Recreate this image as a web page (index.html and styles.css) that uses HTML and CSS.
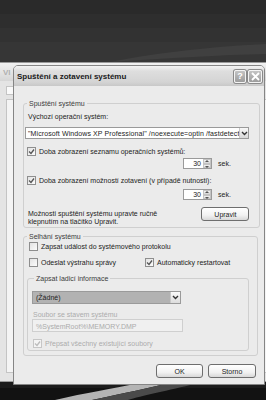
FILE: index.html
```html
<!DOCTYPE html>
<html lang="cs">
<head>
    <meta charset="UTF-8">
    <title>Spuštění a zotavení systému</title>
    <link rel="stylesheet" href="styles.css">
</head>
<body>
<div class="desktop">
    <!-- tapeta -->
    <svg class="wallpaper" width="266" height="400" viewBox="0 0 266 400">
        <rect x="0" y="0" width="266" height="400" fill="#333333"/>
        <rect x="0" y="0" width="266" height="14" fill="#2a2a2a"/>
        <rect x="0" y="14" width="266" height="14" fill="#2e2e2e"/>
        <rect x="0" y="28" width="266" height="14" fill="#323232"/>
        <rect x="0" y="42" width="266" height="20" fill="#363636"/>
        <path d="M110 62 C160 52 220 46 266 44 L266 54 C220 55 170 58 110 62 Z" fill="#404040"/>
        <rect x="0" y="382" width="266" height="6" fill="#1c1c1c"/>
        <rect x="0" y="388" width="266" height="12" fill="#121212"/>
        <path d="M55 400 C85 393 115 388 135 384 L165 384 C140 390 110 396 92 400 Z" fill="#b4b4b4"/>
        <path d="M92 400 C110 396 140 390 165 384 L195 384 C170 390 140 396 128 400 Z" fill="#4a4a4a"/>
    </svg>

    <!-- okno v pozadí -->
    <div class="back-window">
        <div class="back-title">Vl</div>
        <div class="back-tabs"><span class="back-tab"></span></div>
        <div class="back-panel"></div>
    </div>

    <!-- dialog -->
    <div class="dialog">
        <div class="titlebar">
            <span class="title">Spuštění a zotavení systému</span>
            <span class="tbtn help">?</span>
            <span class="tbtn close">
                <svg width="9" height="9" viewBox="0 0 9 9"><path d="M1 1 L8 8 M8 1 L1 8" stroke="#fff" stroke-width="1.8"/></svg>
            </span>
        </div>

        <div class="dialog-body">
            <fieldset class="group">
                <legend>Spuštění systému</legend>
                <div class="label">Výchozí operační systém:</div>
                <div class="select os-select">
                    <span class="select-text">"Microsoft Windows XP Professional" /noexecute=optin /fastdetect</span>
                    <span class="select-arrow"><svg width="7" height="5" viewBox="0 0 7 5"><path d="M1 1 L3.5 3.5 L6 1" fill="none" stroke="#333" stroke-width="1.4"/></svg></span>
                </div>
                <div class="check first-check"><span class="box checked"></span>Doba zobrazení seznamu operačních systémů:</div>
                <div class="spin-row">
                    <div class="spin"><span class="spin-val">30</span><span class="spin-btns"><i class="up"></i><i class="down"></i></span></div>
                    <span>sek.</span>
                </div>
                <div class="check second-check"><span class="box checked"></span>Doba zobrazení možností zotavení (v případě nutnosti):</div>
                <div class="spin-row spin-two">
                    <div class="spin"><span class="spin-val">30</span><span class="spin-btns"><i class="up"></i><i class="down"></i></span></div>
                    <span>sek.</span>
                </div>
                <div class="edit-row">
                    <p>Možnosti spuštění systému upravte ručně<br>klepnutím na tlačítko Upravit.</p>
                    <span class="button edit-btn">Upravit</span>
                </div>
            </fieldset>

            <fieldset class="group failure">
                <legend>Selhání systému</legend>
                <div class="check log-check"><span class="box"></span>Zapsat událost do systémového protokolu</div>
                <div class="check-pair">
                    <div class="check"><span class="box"></span>Odeslat výstrahu správy</div>
                    <div class="check"><span class="box checked"></span>Automaticky restartovat</div>
                </div>

                <fieldset class="group inner">
                    <legend>Zapsat ladicí informace</legend>
                    <div class="select dump-select">
                        <span class="select-text">(Žádné)</span>
                        <span class="select-arrow"><svg width="7" height="5" viewBox="0 0 7 5"><path d="M1 1 L3.5 3.5 L6 1" fill="none" stroke="#333" stroke-width="1.4"/></svg></span>
                    </div>
                    <div class="label disabled dump-label">Soubor se stavem systému</div>
                    <div class="textbox disabled">%SystemRoot%\MEMORY.DMP</div>
                    <div class="check disabled overwrite"><span class="box checked"></span>Přepsat všechny existující soubory</div>
                </fieldset>
            </fieldset>

            <div class="buttons">
                <span class="button ok-btn">OK</span>
                <span class="button cancel-btn">Storno</span>
            </div>
        </div>
    </div>

</div>
</body>
</html>
```

FILE: styles.css
```css
* {
    box-sizing: border-box;
}
body {
    margin: 0;
    font-family: "Liberation Sans", Arial, sans-serif;
    font-size: 7px;
    line-height: 9px;
    color: #222;
}
.desktop {
    position: relative;
    width: 266px;
    height: 400px;
    overflow: hidden;
    background-color: #333;
}

/* tapeta */
.wallpaper {
    position: absolute;
    left: 0;
    top: 0;
    display: block;
}

/* okno v pozadí */
.back-window {
    position: absolute;
    left: -10px;
    top: 62px;
    width: 290px;
    height: 320px;
    background: #e4e4e4;
    border: 1px solid #9a9a9a;
    border-radius: 5px 5px 0 0;
}
.back-title {
    height: 18px;
    padding: 5px 0 0 12px;
    color: #b0b0b0;
    font-weight: bold;
    font-size: 8px;
    background: linear-gradient(#f2f2f2, #d6d6d6);
    border-radius: 5px 5px 0 0;
}
.back-tabs {
    height: 18px;
    padding: 5px 0 0 15px;
}
.back-tab {
    display: block;
    width: 12px;
    height: 9px;
    background: #fafafa;
    border: 1px solid #c4c4c4;
}
.back-panel {
    margin: 0 0 0 15px;
    height: 274px;
    border: 1px solid #c4c4c4;
    border-right: none;
    background: #f4f4f4;
}

/* dialog */
.dialog {
    position: absolute;
    left: 13px;
    top: 65px;
    width: 252px;
    height: 320px;
    background: #ebebeb;
    border: 1px solid #858585;
    border-radius: 5px 5px 0 0;
}
.titlebar {
    display: flex;
    align-items: center;
    height: 20px;
    padding: 0 2px 0 3px;
    background: linear-gradient(#f4f4f4 0%, #dedede 25%, #d4d4d4 80%, #c8c8c8 100%);
    border-radius: 4px 4px 0 0;
}
.title {
    flex: 1;
    font-weight: bold;
    font-size: 8px;
    color: #1a1a1a;
}
.tbtn {
    display: flex;
    align-items: center;
    justify-content: center;
    width: 13px;
    height: 13px;
    margin-left: 2px;
    border: 1px solid #f4f4f4;
    border-radius: 2px;
    background: linear-gradient(#c4c4c4, #9c9c9c);
    box-shadow: 0 0 0 1px #8a8a8a;
}
.help {
    color: #fff;
    font-weight: bold;
    font-size: 9px;
    width: 12px;
}
.close {
    width: 14px;
}

.dialog-body {
    display: flex;
    flex-direction: column;
    padding: 0 6px 0 9px;
}

/* skupiny */
fieldset.group {
    margin: 13px 0 0;
    padding: 0 2px 1px 1px;
    border: 1px solid #cfcfcf;
    border-radius: 3px;
}
fieldset.group legend {
    margin-left: 2px;
    padding: 0 2px;
    color: #3c3c3c;
}
fieldset.failure {
    margin-top: 4px;
    padding-bottom: 4px;
}
fieldset.inner {
    margin: 7px 6px 0 2px;
    padding: 0 2px 2px 4px;
}

.label {
    margin: 4px 0 0 3px;
}
.disabled {
    color: #ababab;
}

/* rozbalovací seznam */
.select {
    display: flex;
    align-items: center;
    height: 12px;
    border: 1px solid #9a9a9a;
    background: #fff;
}
.select-text {
    flex: 1;
    padding-left: 2px;
    white-space: nowrap;
    overflow: hidden;
}
.select-arrow {
    display: flex;
    align-items: center;
    justify-content: center;
    width: 9px;
    height: 100%;
    border-left: 1px solid #c8c8c8;
    background: linear-gradient(#f8f8f8, #d8d8d8);
}
.os-select {
    margin: 6px 8px 0 0;
}
.os-select .select-text {
    letter-spacing: 0.1px;
}
.dump-select {
    margin-top: 8px;
    width: 149px;
    height: 13px;
    background: #b2b2b2;
}
.dump-select .select-text {
    padding-left: 3px;
    color: #1e1e1e;
}
.dump-select .select-arrow {
    background: linear-gradient(#fafafa, #dcdcdc);
    width: 10px;
}

/* zaškrtávací pole */
.check {
    display: flex;
    align-items: center;
    gap: 3px;
    margin-left: 2px;
    white-space: nowrap;
}
.box {
    width: 9px;
    height: 9px;
    border: 1px solid #8e8e8e;
    background: linear-gradient(135deg, #e2e2e2, #fcfcfc);
}
.box.checked {
    background:
        url("data:image/svg+xml;utf8,<svg xmlns='http://www.w3.org/2000/svg' width='7' height='7'><path d='M1 3.5 L3 5.5 L6 1.5' fill='none' stroke='%23555' stroke-width='1.3'/></svg>") center no-repeat,
        linear-gradient(135deg, #e2e2e2, #fcfcfc);
}
.disabled .box {
    border-color: #c6c6c6;
}
.disabled .box.checked {
    background:
        url("data:image/svg+xml;utf8,<svg xmlns='http://www.w3.org/2000/svg' width='7' height='7'><path d='M1 3.5 L3 5.5 L6 1.5' fill='none' stroke='%23bbb' stroke-width='1.3'/></svg>") center no-repeat,
        #f4f4f4;
}
.first-check {
    margin-top: 8px;
}
.second-check {
    margin-top: 7px;
}
.log-check {
    margin: 1px 0 0 4px;
}
.check-pair {
    display: grid;
    grid-template-columns: 116px auto;
    margin: 7px 0 0 4px;
}
.check-pair .check {
    margin-left: 0;
}
.overwrite {
    margin: 7px 0 0 1px;
}

/* číselník */
.spin-row {
    display: flex;
    align-items: center;
    gap: 6px;
    margin: 2px 0 0 158px;
}
.spin-two {
    margin-top: 4px;
}
.spin {
    display: flex;
    width: 29px;
    height: 11px;
    border: 1px solid #9a9a9a;
    background: #fff;
}
.spin-val {
    flex: 1;
    text-align: right;
    padding-right: 2px;
}
.spin-btns {
    display: flex;
    flex-direction: column;
    width: 8px;
}
.spin-btns i {
    flex: 1;
    position: relative;
    background: linear-gradient(#f6f6f6, #d6d6d6);
    border: 1px solid #c4c4c4;
}
.spin-btns i::after {
    content: "";
    position: absolute;
    left: 1px;
    border-left: 2px solid transparent;
    border-right: 2px solid transparent;
}
.spin-btns .up::after {
    top: 0;
    border-bottom: 2px solid #555;
}
.spin-btns .down::after {
    top: 1px;
    border-top: 2px solid #555;
}

/* řádek s tlačítkem Upravit */
.edit-row {
    display: flex;
    align-items: flex-start;
    margin: 7px 8px 0 3px;
}
.edit-row p {
    flex: 1;
    margin: 3px 0 0;
    line-height: 8px;
}

/* tlačítka */
.button {
    display: flex;
    align-items: center;
    justify-content: center;
    height: 14px;
    border: 1px solid #6e6e6e;
    border-radius: 3px;
    background: linear-gradient(#ffffff 0%, #f2f2f2 60%, #d8d8d8 100%);
    color: #222;
}
.edit-btn {
    width: 48px;
}
.buttons {
    display: flex;
    justify-content: flex-end;
    gap: 5px;
    margin-top: 8px;
    padding-right: 2px;
}
.ok-btn {
    width: 47px;
}
.cancel-btn {
    width: 48px;
}

.dump-label {
    margin: 6px 0 0 1px;
}
.textbox {
    width: 151px;
    height: 13px;
    padding: 2px 0 0 3px;
    border: 1px solid #cfcfcf;
    background: #f0f0f0;
}
```
